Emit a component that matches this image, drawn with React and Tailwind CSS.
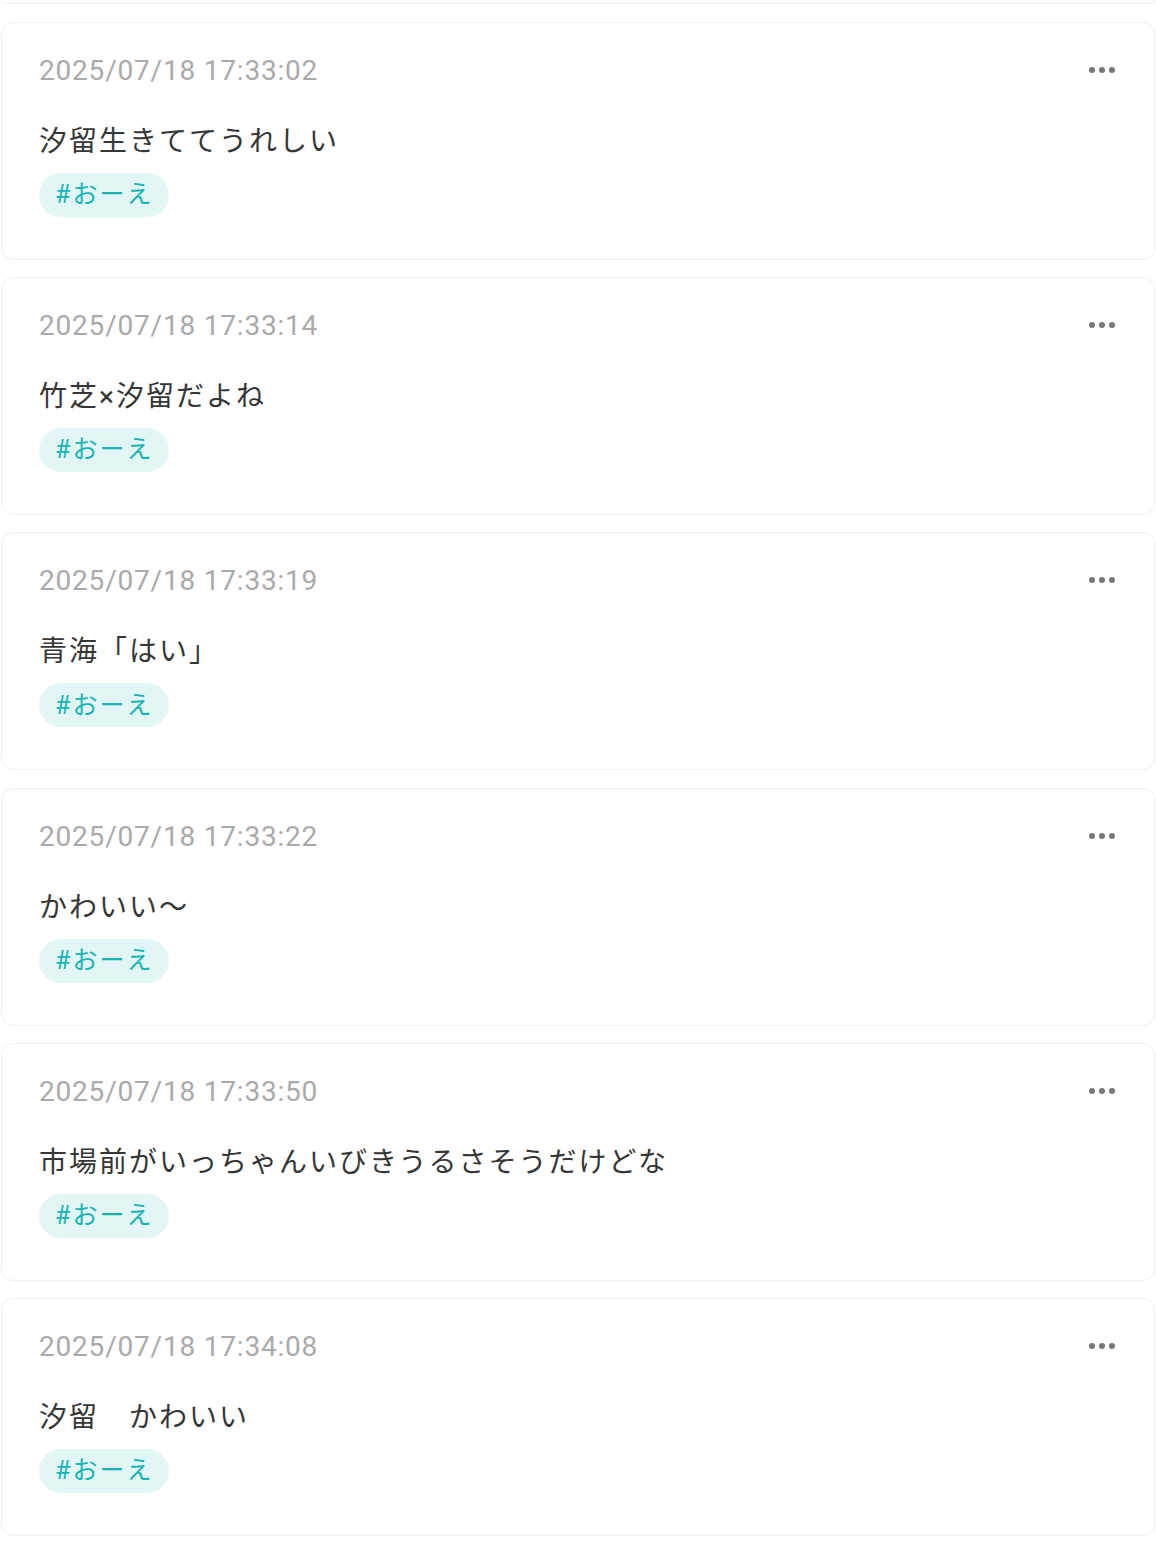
const posts = [
  { time: "2025/07/18 17:33:02", body: "汐留生きててうれしい" },
  { time: "2025/07/18 17:33:14", body: "竹芝×汐留だよね" },
  { time: "2025/07/18 17:33:19", body: "青海「はい」" },
  { time: "2025/07/18 17:33:22", body: "かわいい〜" },
  { time: "2025/07/18 17:33:50", body: "市場前がいっちゃんいびきうるさそうだけどな" },
  { time: "2025/07/18 17:34:08", body: "汐留　かわいい" },
];

function PostCard({ post }) {
  return (
    <div className="rounded-[12px] border border-[#efefef] bg-white pt-[35px] pb-[42px] pl-[37px] pr-[38px]">
      {/* 日時 + メニュー */}
      <div className="flex items-center justify-between">
        <div className="text-[28px] leading-[26px] text-[#aaaaaa] tracking-[0.8px]">{post.time}</div>
        <button className="mb-[2px] flex items-center gap-[4px] px-[1px]">
          <span className="block w-[6px] h-[6px] rounded-full bg-[#777777]" />
          <span className="block w-[6px] h-[6px] rounded-full bg-[#777777]" />
          <span className="block w-[6px] h-[6px] rounded-full bg-[#777777]" />
        </button>
      </div>

      {/* 本文 */}
      <p className="mt-[38px] text-[28px] leading-[40px] tracking-[2px] text-[#363636]">{post.body}</p>

      {/* タグ */}
      <div className="mt-[11px] flex">
        <span className="inline-flex items-center h-[44px] px-[16px] rounded-full bg-[#e3f6f6] text-[#14b5b5] text-[25px] tracking-[2px]">
          #おーえ
        </span>
      </div>
    </div>
  );
}

export default function App() {
  return (
    <div
      className="min-h-[1551px] bg-white px-[1px]"
      style={{ fontFamily: 'Roboto, "Noto Sans CJK JP", sans-serif' }}
    >
      {/* 前の投稿の下端 */}
      <div className="h-[4px] rounded-b-[12px] border border-t-0 border-[#efefef]" />
      <div className="mt-[18px] flex flex-col gap-[17.2px]">
        {posts.map((post) => (
          <PostCard key={post.time} post={post} />
        ))}
      </div>
    </div>
  );
}
